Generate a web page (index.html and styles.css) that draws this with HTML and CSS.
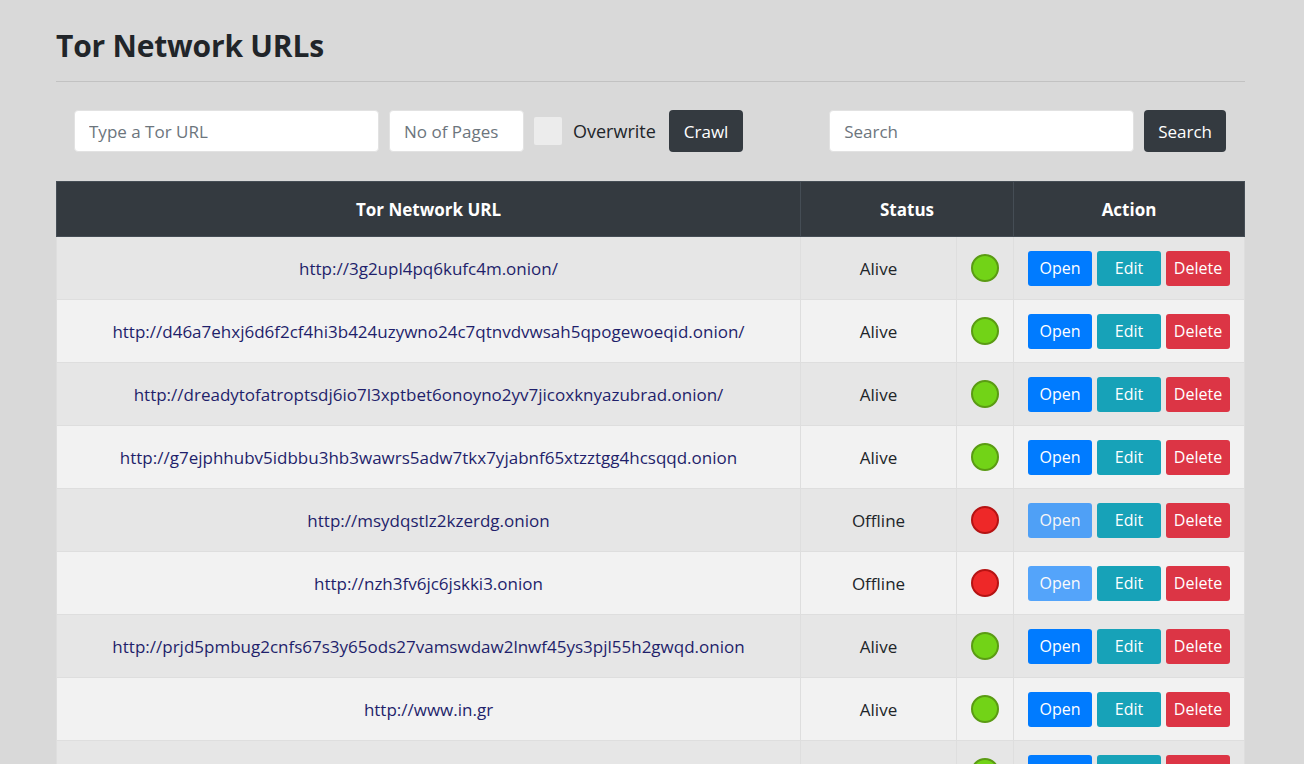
FILE: index.html
```html
<!DOCTYPE html>
<html>
<head>
<meta charset="utf-8">
<title>Tor Network URLs</title>
<link rel="stylesheet" href="styles.css">
</head>
<body>
<main class="container">
  <h1 class="title">Tor Network URLs</h1>
  <hr class="rule">
  <div class="toolbar">
    <form class="group">
      <input class="field field-url" type="text" placeholder="Type a Tor URL">
      <input class="field field-pages" type="text" placeholder="No of Pages">
      <label class="check"><span class="box"></span><span>Overwrite</span></label>
      <button class="btn btn-dark" type="button">Crawl</button>
    </form>
    <form class="group">
      <input class="field field-search" type="text" placeholder="Search">
      <button class="btn btn-dark btn-search" type="button">Search</button>
    </form>
  </div>
  <table class="grid">
    <colgroup>
      <col class="col-url">
      <col class="col-st">
      <col class="col-dot">
      <col class="col-act">
    </colgroup>
    <thead>
      <tr>
        <th>Tor Network URL</th>
        <th colspan="2">Status</th>
        <th>Action</th>
      </tr>
    </thead>
    <tbody>
      <tr><td><a href="#">http://3g2upl4pq6kufc4m.onion/</a></td><td>Alive</td><td><span class="dot on"></span></td><td class="act"><button class="b b-open">Open</button><button class="b b-edit">Edit</button><button class="b b-del">Delete</button></td></tr>
      <tr><td><a href="#">http://d46a7ehxj6d6f2cf4hi3b424uzywno24c7qtnvdvwsah5qpogewoeqid.onion/</a></td><td>Alive</td><td><span class="dot on"></span></td><td class="act"><button class="b b-open">Open</button><button class="b b-edit">Edit</button><button class="b b-del">Delete</button></td></tr>
      <tr><td><a href="#">http://dreadytofatroptsdj6io7l3xptbet6onoyno2yv7jicoxknyazubrad.onion/</a></td><td>Alive</td><td><span class="dot on"></span></td><td class="act"><button class="b b-open">Open</button><button class="b b-edit">Edit</button><button class="b b-del">Delete</button></td></tr>
      <tr><td><a href="#">http://g7ejphhubv5idbbu3hb3wawrs5adw7tkx7yjabnf65xtzztgg4hcsqqd.onion</a></td><td>Alive</td><td><span class="dot on"></span></td><td class="act"><button class="b b-open">Open</button><button class="b b-edit">Edit</button><button class="b b-del">Delete</button></td></tr>
      <tr><td><a href="#">http://msydqstlz2kzerdg.onion</a></td><td>Offline</td><td><span class="dot off"></span></td><td class="act"><button class="b b-open" disabled>Open</button><button class="b b-edit">Edit</button><button class="b b-del">Delete</button></td></tr>
      <tr><td><a href="#">http://nzh3fv6jc6jskki3.onion</a></td><td>Offline</td><td><span class="dot off"></span></td><td class="act"><button class="b b-open" disabled>Open</button><button class="b b-edit">Edit</button><button class="b b-del">Delete</button></td></tr>
      <tr><td><a href="#">http://prjd5pmbug2cnfs67s3y65ods27vamswdaw2lnwf45ys3pjl55h2gwqd.onion</a></td><td>Alive</td><td><span class="dot on"></span></td><td class="act"><button class="b b-open">Open</button><button class="b b-edit">Edit</button><button class="b b-del">Delete</button></td></tr>
      <tr><td><a href="#">http://www.in.gr</a></td><td>Alive</td><td><span class="dot on"></span></td><td class="act"><button class="b b-open">Open</button><button class="b b-edit">Edit</button><button class="b b-del">Delete</button></td></tr>
      <tr><td><a href="#">http://vww6ybal4bd7szmgncyruucpgfkqahzddi37ktceo3ah7ngmcopnpyyd.onion</a></td><td>Alive</td><td><span class="dot on"></span></td><td class="act"><button class="b b-open">Open</button><button class="b b-edit">Edit</button><button class="b b-del">Delete</button></td></tr>
    </tbody>
  </table>
</main>
</body>
</html>
```
FILE: styles.css
```css
* { box-sizing: border-box; }
html, body { margin: 0; padding: 0; }
body {
  background: #d9d9d9;
  font-family: "Open Sans", "Noto Sans", "Liberation Sans", sans-serif;
  color: #212529;
  font-size: 17px;
}
.container {
  width: 1189px;
  margin: 0 0 0 56px;
  padding-top: 27px;
}
.title {
  margin: 0;
  font-size: 30px;
  font-weight: 700;
  line-height: 38px;
  color: #212529;
  letter-spacing: -0.2px;
}
.rule {
  margin: 16px 0 0;
  border: 0;
  border-top: 1px solid #c2c2c2;
}
.toolbar {
  display: flex;
  justify-content: space-between;
  align-items: center;
  padding: 28px 19px 0 18px;
}
.group {
  display: flex;
  align-items: center;
  margin: 0;
}
.field {
  height: 42px;
  border: 1px solid #e2e2e2;
  border-radius: 4px;
  background: #fff;
  padding: 0 14px;
  font-family: inherit;
  font-size: 17px;
  color: #495057;
}
.field::placeholder { color: #6c757d; }
.field-url { width: 305px; margin-right: 10px; }
.field-pages { width: 135px; margin-right: 10px; }
.field-search { width: 305px; margin-right: 10px; }
.check {
  display: flex;
  align-items: center;
  font-size: 18px;
  color: #212529;
  margin-right: 13px;
}
.box {
  width: 28px;
  height: 28px;
  background: #ececec;
  border-radius: 2px;
  margin-right: 11px;
}
.btn {
  height: 42px;
  border: 0;
  border-radius: 4px;
  padding: 0 15px;
  font-family: inherit;
  font-size: 17px;
}
.btn-dark { background: #343a40; color: #fff; }
.btn-search { padding: 0 14px; }
.grid {
  margin-top: 29px;
  width: 100%;
  border-collapse: collapse;
  table-layout: fixed;
}
.col-url { width: 744px; }
.col-st { width: 156px; }
.col-dot { width: 57px; }
.grid th {
  background: #343a40;
  color: #fff;
  font-size: 17px;
  font-weight: 700;
  height: 55px;
  border: 1px solid #454d55;
  text-align: center;
}
.grid td {
  height: 63px;
  border: 1px solid #dedede;
  text-align: center;
  font-size: 17px;
  padding: 0;
}
.grid tbody tr:nth-child(odd) { background: #e6e6e6; }
.grid tbody tr:nth-child(even) { background: #f2f2f2; }
.grid a { color: #1f1f6b; text-decoration: none; }
.dot {
  display: inline-block;
  width: 28px;
  height: 28px;
  border-radius: 50%;
  vertical-align: middle;
}
.dot.on { background: #72d317; border: 2px solid #5a9b13; }
.dot.off { background: #ee2828; border: 2px solid #b51313; }
.act { white-space: nowrap; }
.b {
  height: 35px;
  width: 64px;
  border: 0;
  border-radius: 3px;
  color: #fff;
  font-family: inherit;
  font-size: 16px;
  margin: 0 2.5px;
  padding: 0;
  vertical-align: middle;
}
.b-open { background: #007bff; }
.b-open:disabled { background: #007bff; opacity: 0.65; }
.b-edit { background: #17a2b8; }
.b-del { background: #dc3545; }
```
